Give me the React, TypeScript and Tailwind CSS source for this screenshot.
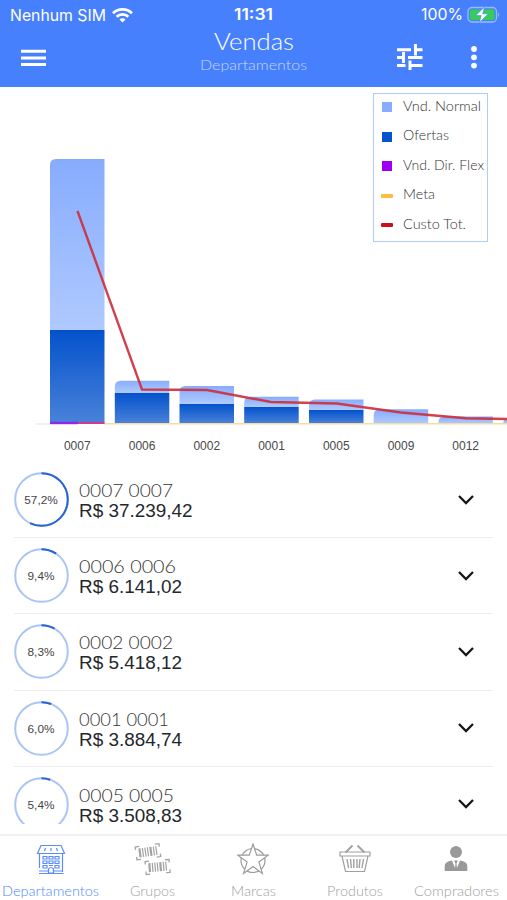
import clsx from "clsx";
import type { ReactNode } from "react";

const bars = [
  { label: "0007", x: 50, top: 159, split: 330 },
  { label: "0006", x: 114.8, top: 380.7, split: 393 },
  { label: "0002", x: 179.5, top: 386, split: 404 },
  { label: "0001", x: 244.2, top: 396.7, split: 407 },
  { label: "0005", x: 309, top: 399.5, split: 410 },
  { label: "0009", x: 373.7, top: 409.3, split: 423.5 },
  { label: "0012", x: 438.4, top: 416.5, split: 423.5 },
  { label: "", x: 503.2, top: 419, split: 423.5 },
];

const legend = [
  { label: "Vnd. Normal", color: "bg-[#86adff]", line: false, width: 78 },
  { label: "Ofertas", color: "bg-[#0753cb]", line: false, width: 46 },
  { label: "Vnd. Dir. Flex", color: "bg-[#9f00f4]", line: false, width: 81 },
  { label: "Meta", color: "bg-[#fdbc42]", line: true, width: 32 },
  { label: "Custo Tot.", color: "bg-[#cb1118]", line: true, width: 63 },
];

const rows = [
  { code: "0007 0007", value: "R$ 37.239,42", percent: 57.2, width: 94 },
  { code: "0006 0006", value: "R$ 6.141,02", percent: 9.4, width: 97 },
  { code: "0002 0002", value: "R$ 5.418,12", percent: 8.3, width: 94 },
  { code: "0001 0001", value: "R$ 3.884,74", percent: 6.0, width: 90 },
  { code: "0005 0005", value: "R$ 3.508,83", percent: 5.4, width: 95 },
];

type FitTextProps = {
  children: string;
  width: number;
  size: number;
  font?: string;
  className?: string;
};

// Light label set to a fixed measure
function FitText({ children, width, size, font = "font-['Lato',sans-serif]", className }: FitTextProps) {
  return (
    <svg width={width} height={size + 6} className={clsx("shrink-0 overflow-visible fill-current", font, className)}>
      <text x="0" y={size} fontSize={size} textLength={width} lengthAdjust="spacingAndGlyphs">
        {children}
      </text>
    </svg>
  );
}

function StatusBar() {
  return (
    <div className="grid h-[30px] grid-cols-3 items-center pr-[7px] pl-[10px] leading-none">
      <div className="flex items-center gap-[6px]">
        <FitText width={96} size={16.5} font="font-['Inter',sans-serif]">Nenhum SIM</FitText>
        <svg width="21" height="15" viewBox="0 0 21 15" fill="none" stroke="white" strokeWidth="2.7">
          <path d="M1 5.2C6.3.2 14.7.2 20 5.2" />
          <path d="M4.6 8.8C7.9 5.6 13.1 5.6 16.4 8.8" />
          <path d="M10.5 14.5 7.5 11.4C9.2 10 11.8 10 13.5 11.4Z" fill="white" stroke="none" />
        </svg>
      </div>
      <div className="flex justify-center pr-[2px]">
        <FitText width={39} size={16} font="font-['Inter',sans-serif]" className="font-semibold">11:31</FitText>
      </div>
      <div className="flex items-center justify-end gap-[4px]">
        <FitText width={42} size={16} font="font-['Inter',sans-serif]">100%</FitText>
        <svg width="33" height="18" viewBox="0 0 33 18">
          <rect x="1" y="1.5" width="28.5" height="14.5" rx="4" fill="none" stroke="#9abaff" strokeWidth="1.3" />
          <rect x="3" y="3.5" width="24.5" height="10.5" rx="2" fill="#35cd58" />
          <path d="M31 6.5q2 2.3 0 4.5Z" fill="#9abaff" />
          <path d="M17.5 1 8.7 9.6h5.5L12.5 16.5 21.3 7.8h-5.6Z" fill="white" stroke="#4780fa" strokeWidth=".6" />
        </svg>
      </div>
    </div>
  );
}

function Header() {
  return (
    <header className="h-[87px] bg-[#4780fc] text-white">
      <StatusBar />
      <div className="grid h-[54px] grid-cols-3 items-center">
        <svg className="mt-px ml-[21px]" width="26" height="18" viewBox="0 0 26 18" fill="white">
          <path d="M0 .7h25v3H0zM0 7.4h25v3H0zM0 14.1h25v3H0z" />
        </svg>
        <div className="flex h-[54px] flex-col items-center">
          <FitText width={80} size={22.5} className="-mt-[3px] font-light">Vendas</FitText>
          <FitText width={107} size={14.5} className="-mt-[1px] font-light text-[#c5d7ff]">Departamentos</FitText>
        </div>
        <div className="flex items-center justify-end gap-[48px] pr-[30px]">
          <svg width="26" height="26" viewBox="0 0 26 26" fill="white">
            <path d="M0 4.3h14v3H0zM17 0h3v4.3h5.5v3H20v4.2h-3zM0 12h5V8h3v11H5v-4H0zM11 12h14.5v3H11zM0 20h8.5v3H0zM11.5 16.5h3V20h11v3h-11v3h-3z" />
          </svg>
          <svg width="6" height="24" viewBox="0 0 6 24" fill="white">
            <circle cx="3" cy="4" r="2.9" />
            <circle cx="3" cy="12.3" r="2.9" />
            <circle cx="3" cy="20.6" r="2.9" />
          </svg>
        </div>
      </div>
    </header>
  );
}

function Chart() {
  return (
    <section className="relative h-[375px]">
      <svg width="507" height="375" viewBox="0 87 507 375">
        <defs>
          <linearGradient id="normal" x1="0" y1="0" x2="0" y2="1">
            <stop offset="0" stopColor="#87acfd" />
            <stop offset="1" stopColor="#b0caff" />
          </linearGradient>
          <linearGradient id="ofertas" x1="0" y1="0" x2="0" y2="1">
            <stop offset="0" stopColor="#0452cc" />
            <stop offset="1" stopColor="#4982d9" />
          </linearGradient>
        </defs>
        <path d="M36 424H50" stroke="#dfe4f5" />
        {bars.map((bar) => {
          const r = Math.min(6, 423.5 - bar.top);
          return (
            <g key={bar.x}>
              <path
                d={`M${bar.x} ${bar.split}V${bar.top + r}q0-${r} ${r}-${r}H${bar.x + 54.5}V${bar.split}Z`}
                fill="url(#normal)"
              />
              <rect x={bar.x} y={bar.split} width="54.5" height={423.5 - bar.split} fill="url(#ofertas)" />
              <text
                x={bar.x + 27.3}
                y="449.5"
                textAnchor="middle"
                fontSize="12"
                fill="#484848"
                className="font-['Liberation_Sans',sans-serif]"
              >
                {bar.label}
              </text>
            </g>
          );
        })}
        <path d="M104 423.7H507" stroke="#f2dda5" strokeWidth="1.4" />
        <path d="M50 423H78" stroke="#9127ee" strokeWidth="2.4" />
        <path d="M78 423H104.5" stroke="#cf3b91" strokeWidth="2" />
        <path
          d="M77.5 211 142 389.5 207 390 271 402 337 403.5 401 412.5 466 418.2 507 419"
          fill="none"
          stroke="#cc2e3b"
          strokeOpacity=".9"
          strokeWidth="2.4"
        />
      </svg>
      <ul className="absolute top-[6px] left-[373px] flex h-[149px] w-[115px] flex-col justify-between border border-[#b2cbff] pt-[2px] pb-[5px]">
        {legend.map((item) => (
          <li key={item.label} className="flex h-[22px] items-center">
            <span className="flex w-[29px] justify-start pl-[7px]">
              <span className={clsx(item.color, item.line ? "h-[4px] w-[12px] rounded-[1px]" : "ml-px h-[10px] w-[10px]")} />
            </span>
            <FitText width={item.width} size={13} className="font-light text-[#333]">{item.label}</FitText>
          </li>
        ))}
      </ul>
    </section>
  );
}

function Ring({ percent }: { percent: number }) {
  return (
    <svg width="55" height="55" viewBox="0 0 55 55" fill="none" strokeWidth="2">
      <circle cx="27.5" cy="27.5" r="26.3" stroke="#a9c5f6" />
      <circle
        cx="27.5"
        cy="27.5"
        r="26.3"
        stroke="#2464d3"
        pathLength="100"
        strokeDasharray={`${percent} 100`}
        transform="rotate(-90 27.5 27.5)"
      />
      <text x="27" y="31.6" textAnchor="middle" fontSize="11.8" fill="#444" className="font-['Liberation_Sans',sans-serif]">
        {percent.toFixed(1).replace(".", ",")}%
      </text>
    </svg>
  );
}

function DepartmentList() {
  return (
    <ul className="h-[362px] overflow-hidden px-[14px]">
      {rows.map((row) => (
        <li key={row.code} className="flex h-[76.2px] items-center border-b border-[#ededed]">
          <Ring percent={row.percent} />
          <div className="ml-[10px] flex-1 pt-[1px]">
            <FitText width={row.width} size={18} className="font-light text-[#333]">{row.code}</FitText>
            <p className="-mt-[3px] font-['Liberation_Sans',sans-serif] text-[18.9px] leading-[21px] text-[#24272d]">{row.value}</p>
          </div>
          <svg className="mr-[18px]" width="18" height="12" viewBox="0 0 18 12" fill="none" stroke="#171717" strokeWidth="2.3">
            <path d="m2 2 7 7 7-7" />
          </svg>
        </li>
      ))}
    </ul>
  );
}

function BuildingIcon() {
  return (
    <svg width="30" height="31" viewBox="0 0 30 31" fill="none" stroke="#5b8df8" strokeWidth="1.2">
      <path d="M5 1.5h20l3.500 8H1.5zM3.500 9.500V24M26.500 9.500V28M3 29.500h24.500M3 27h9M18 27h9" />
      <path d="M9.500 4 8.500 7M15 4v3M20.500 4l1 3" />
      <path d="M7 12.500h4v2.500H7zM13 12.500h4v2.500h-4zM19 12.500h4v2.500h-4zM7 17h4v2.500H7zM13 17h4v2.500h-4zM19 17h4v2.500h-4zM7 21.500h4v2.500H7zM13 21.500h4M19 21.500h4v2.500h-4z" />
      <path d="M12.500 29v-4q2.500-3 5 0v4z" />
    </svg>
  );
}

function BarcodeIcon() {
  const code = (
    <>
      <path d="M0 4V1h4M20 1h4v3M24 11v3h-4M4 14H0v-3" strokeWidth="1.3" />
      <path d="M4 3v9M15 3v9" strokeWidth="2.2" />
      <path d="M7 3v9M9.5 3v9M12 3v9M18 3v9M20.5 3v9" strokeWidth="1.2" />
    </>
  );
  return (
    <svg width="37" height="34" viewBox="0 0 37 34" fill="none" stroke="#a3a3a3">
      <g transform="translate(1 4) rotate(-8)">{code}</g>
      <g transform="translate(11 18.5) rotate(-5)">{code}</g>
    </svg>
  );
}

function StarIcon() {
  return (
    <svg width="32" height="32" viewBox="0 0 32 32" fill="none" stroke="#9b9b9b" strokeWidth="1.2">
      <circle cx="16" cy="17.5" r="12" />
      <path fill="white" d="m16 1 3.7 11.1 11.5.1-9.3 6.9 3.5 11.3-9.400-6.900-9.400 6.900 3.500-11.300-9.300-6.900 11.500-.1Z" />
    </svg>
  );
}

function BasketIcon() {
  return (
    <svg width="32" height="30" viewBox="0 0 32 30" fill="none" stroke="#a0a0a0" strokeWidth="1.2">
      <path d="M1 8h30v4H1zM3 12l3.500 15.500h19L29 12" />
      <path d="m6.500 8.500 7-7M25.500 8.500l-7-7" strokeWidth="1.800" />
      <path d="m8 15 1.500 9M11.500 15l.8 9M14.800 15v9M18 15v9M21 15l-.8 9M24.500 15 23 24" strokeWidth="1.400" />
    </svg>
  );
}

function BuyerIcon() {
  return (
    <svg width="24" height="28" viewBox="0 0 24 28" fill="#999">
      <circle cx="12" cy="7" r="6" />
      <path d="M.7 26v-5Q.7 16.500 8 15.500L11 23l.5-4.500L10 15.500h4l-1.500 3L13 23l3-7.500q7.300 1 7.300 5.500v5z" />
    </svg>
  );
}

type Tab = { label: string; width: number; icon: ReactNode; active?: boolean };

const tabs: Tab[] = [
  { label: "Departamentos", width: 97, icon: <BuildingIcon />, active: true },
  { label: "Grupos", width: 45, icon: <BarcodeIcon /> },
  { label: "Marcas", width: 45, icon: <StarIcon /> },
  { label: "Produtos", width: 56, icon: <BasketIcon /> },
  { label: "Compradores", width: 85, icon: <BuyerIcon /> },
];

function BottomNav() {
  return (
    <nav className="mt-[10px] grid h-[66px] grid-cols-5 border-t-2 border-[#f2f2f2]">
      {tabs.map((tab) => (
        <button
          key={tab.label}
          className={clsx("flex flex-col items-center", tab.active ? "text-[#5088ff]" : "text-[#a0a0a0]")}
        >
          <span className="flex h-[46px] items-center justify-center">{tab.icon}</span>
          <FitText width={tab.width} size={13.5} className="font-light">{tab.label}</FitText>
        </button>
      ))}
    </nav>
  );
}

export default function App() {
  return (
    <main className="h-[900px] w-[507px] overflow-hidden bg-white">
      <Header />
      <Chart />
      <DepartmentList />
      <BottomNav />
    </main>
  );
}
